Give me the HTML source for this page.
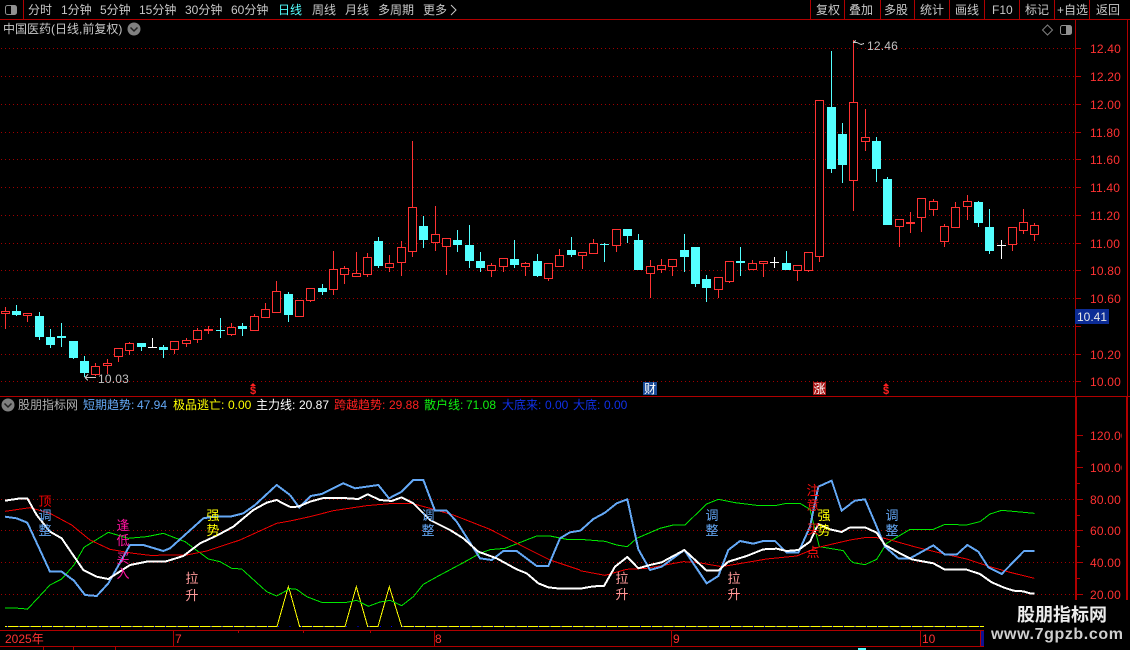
<!DOCTYPE html>
<html><head><meta charset="utf-8"><title>中国医药</title>
<style>
html,body{margin:0;padding:0;background:#000;width:1130px;height:650px;overflow:hidden}
svg{display:block;position:absolute;left:0;top:0}
text{font-family:"Liberation Sans","WenQuanYi Zen Hei","Noto Sans CJK SC",sans-serif;font-size:12px;white-space:pre}
.m text{fill:#c8c8c8}
.a text{fill:#ff3232;letter-spacing:.2px}
.v text{text-anchor:middle;font-size:13px}
.l{fill:none;shape-rendering:crispEdges}
</style></head>
<body>
<svg width="1130" height="650" viewBox="0 0 1130 650" xmlns="http://www.w3.org/2000/svg">
<defs><clipPath id="ax"><rect x="1078" y="20" width="44" height="600"/></clipPath></defs>
<rect width="1130" height="650" fill="#000"/>

<!-- grid -->
<path fill="none" stroke="#a00000" stroke-dasharray="1 3" shape-rendering="crispEdges" d="M1 48.500H1075M1 76.500H1075M1 104.500H1075M1 132.500H1075M1 159.500H1075M1 187.500H1075M1 215.500H1075M1 243.500H1075M1 270.500H1075M1 298.500H1075M1 326.500H1075M1 354.500H1075M1 381.500H1075M1 499.500H1075M1 530.500H1075M1 562.500H1075M1 594.500H1075"/>

<!-- frame lines -->
<path fill="none" stroke="#b00000" shape-rendering="crispEdges" d="M0 19.500H1130M23.500 0V19M810.500 0V19M844.500 0V19M880.500 0V19M914.500 0V19M949.500 0V19M984.500 0V19M1019.500 0V19M1054.500 0V19M1089.500 0V19M1075.500 20V630M1076.500 396V630M1127.500 20V600M1126.500 396V600M0 396.500H1130M0 630.500H984M0 646.500H984M173.500 631V646M434.500 631V646M671.500 631V646M920.500 631V646M980.500 631V646M43.500 647V650M73.500 647V650M115.500 647V650M238.500 630V633M303.500 630V633M370.500 630V633M1075 48.500h6M1075 76.500h6M1075 104.500h6M1075 132.500h6M1075 159.500h6M1075 187.500h6M1075 215.500h6M1075 243.500h6M1075 270.500h6M1075 298.500h6M1075 326.500h6M1075 354.500h6M1075 381.500h6M1077 435.500h6M1077 467.500h6M1077 499.500h6M1077 530.500h6M1077 562.500h6M1077 594.500h6M1077 451.500h3M1077 483.500h3M1077 515.500h3M1077 546.500h3M1077 578.500h3"/>

<!-- red wicks -->
<path class="l" stroke="#ff3232" d="M5.500 307V329M27.500 313V322M95.500 363V376M107.500 359V374M118.500 348V362M129.500 342V355M174.500 341V354M186.500 338V347M197.500 328V343M208.500 326V334M231.500 323V336M254.500 314V331M265.500 303V318M276.500 281V313M299.500 300V317M310.500 288V302M333.500 251V295M344.500 266V284M356.500 252V276M367.500 253V277M389.500 255V272M401.500 241V276M412.500 141V257M435.500 206V251M446.500 238V275M491.500 263V277M503.500 258V272M525.500 262V276M548.500 263V281M559.500 249V266M582.500 252V269M593.500 239V254M616.500 229V252M650.500 260V298M661.500 259V273M672.500 259V276M718.500 277V298M729.500 261V283M752.500 260V270M763.500 261V277M797.500 265V281M808.500 252V272M819.500 100V262M853.500 40V211M865.500 109V151M899.500 219V247M910.500 212V233M921.500 198V232M933.500 199V216M944.500 224V247M955.500 202V227M967.500 195V220M1012.500 227V251M1023.500 209V234M1034.500 223V241"/>
<!-- red bodies -->
<path class="l" style="fill:#000" stroke="#ff3232" d="M1.500 311.500h8v2h-8zM23.500 313.500h8v2h-8zM91.500 366.500h8v8h-8zM103.500 363.500h8v2h-8zM114.500 348.500h8v8h-8zM125.500 343.500h8v7h-8zM170.500 341.500h8v8h-8zM182.500 340.500h8v3h-8zM193.500 330.500h8v9h-8zM227.500 327.500h8v7h-8zM250.500 316.500h8v14h-8zM261.500 309.500h8v8h-8zM272.500 291.500h8v21h-8zM295.500 300.500h8v16h-8zM306.500 288.500h8v12h-8zM329.500 269.500h8v20h-8zM340.500 268.500h8v6h-8zM352.500 273.500h8v3h-8zM363.500 257.500h8v17h-8zM385.500 263.500h8v4h-8zM397.500 247.500h8v15h-8zM408.500 207.500h8v44h-8zM431.500 234.500h8v8h-8zM442.500 238.500h8v8h-8zM487.500 265.500h8v5h-8zM499.500 258.500h8v8h-8zM521.500 263.500h8v3h-8zM544.500 263.500h8v15h-8zM555.500 255.500h8v11h-8zM578.500 252.500h8v3h-8zM589.500 243.500h8v10h-8zM612.500 229.500h8v16h-8zM646.500 266.500h8v7h-8zM657.500 265.500h8v4h-8zM668.500 259.500h8v7h-8zM714.500 277.500h8v12h-8zM725.500 261.500h8v20h-8zM748.500 263.500h8v6h-8zM759.500 261.500h8v2h-8zM793.500 265.500h8v5h-8zM804.500 252.500h8v18h-8zM815.500 100.500h8v156h-8zM849.500 102.500h8v78h-8zM861.500 137.500h8v4h-8zM895.500 219.500h8v7h-8zM917.500 198.500h8v19h-8zM929.500 201.500h8v8h-8zM940.500 226.500h8v15h-8zM951.500 207.500h8v20h-8zM963.500 201.500h8v5h-8zM1008.500 227.500h8v17h-8zM1019.500 222.500h8v8h-8zM1030.500 225.500h8v9h-8z"/>
<path fill="#ff3232" shape-rendering="crispEdges" d="M204 329h9v2h-9zM906 222h9v2h-9z"/>

<!-- cyan -->
<path class="l" stroke="#54ffff" d="M16.500 305V316M39.500 312V340M50.500 329V348M61.500 323V347M73.500 341V359M84.500 356V377M141.500 343V351M163.500 345V358M220.500 318V338M242.500 323V336M288.500 292V322M322.500 284V295M378.500 237V268M423.500 216V248M457.500 230V252M469.500 225V268M480.500 252V272M514.500 240V268M537.500 254V277M571.500 237V257M604.500 243V262M627.500 229V243M638.500 234V270M684.500 234V272M695.500 247V287M706.500 275V302M740.500 247V276M786.500 251V270M831.500 51V173M842.500 123V183M876.500 137V182M887.500 177V225M978.500 201V227M989.500 209V254"/>
<path fill="#54ffff" shape-rendering="crispEdges" d="M12 311h9v4h-9zM35 316h9v21h-9zM46 337h9v8h-9zM57 336h9v2h-9zM69 341h9v17h-9zM80 361h9v12h-9zM137 343h9v4h-9zM159 347h9v3h-9zM216 330h9v1h-9zM238 326h9v3h-9zM284 294h9v21h-9zM318 288h9v4h-9zM374 241h9v25h-9zM419 226h9v14h-9zM453 240h9v5h-9zM465 245h9v16h-9zM476 261h9v7h-9zM510 259h9v6h-9zM533 261h9v15h-9zM567 250h9v5h-9zM600 244h9v1h-9zM623 229h9v7h-9zM634 240h9v30h-9zM680 250h9v7h-9zM691 247h9v37h-9zM702 279h9v9h-9zM736 261h9v2h-9zM782 263h9v7h-9zM827 107h9v62h-9zM838 134h9v31h-9zM872 141h9v28h-9zM883 179h9v46h-9zM974 202h9v21h-9zM985 227h9v24h-9z"/>

<!-- white doji -->
<path class="l" stroke="#fff" d="M152.500 338V348M148 347.500h9M774.500 257V268M770 262.500h9M1001.500 240V259M997 245.500h9"/>

<!-- high/low markers -->
<path fill="none" stroke="#c8c8c8" shape-rendering="crispEdges" d="M85 377.500h11M85 377.500l3-3M85 377.500l3 3M853 42.500h4M853 42.500l3-2M857 42.500l2 1 2 1 3-1"/>
<text x="98" y="383" fill="#c0c0c0" letter-spacing=".2">10.03</text>
<text x="867" y="50" fill="#c0c0c0" letter-spacing=".2">12.46</text>

<!-- top menu -->
<rect x="5.500" y="5.500" width="11" height="9" rx="2" fill="none" stroke="#909090"/>
<rect x="11" y="6" width="5" height="8" fill="#909090"/>
<g class="m">
<text x="28" y="14">分时</text><text x="61" y="14">1分钟</text><text x="100" y="14">5分钟</text><text x="139" y="14">15分钟</text><text x="185" y="14">30分钟</text><text x="231" y="14">60分钟</text>
<text x="278" y="14" style="fill:#54ffff">日线</text><text x="312" y="14">周线</text><text x="345" y="14">月线</text><text x="378" y="14">多周期</text><text x="423" y="14">更多</text>
<text x="816" y="14">复权</text><text x="849" y="14">叠加</text><text x="884" y="14">多股</text><text x="920" y="14">统计</text><text x="955" y="14">画线</text><text x="992" y="14">F10</text><text x="1025" y="14">标记</text><text x="1057" y="14">+自选</text><text x="1096" y="14">返回</text>
<text x="3" y="33">中国医药(日线,前复权)</text>
</g>
<path fill="none" stroke="#c8c8c8" d="M451 5l5 5-5 5"/>
<circle cx="134" cy="29" r="6.500" fill="#808080"/>
<path fill="none" stroke="#222" stroke-width="1.500" d="M130.500 27.500l3.500 3.500 3.500-3.500"/>
<path fill="none" stroke="#808080" d="M1047.500 25l5 5-5 5-5-5z"/>
<rect x="1060.500" y="25.500" width="11" height="9" rx="2" fill="none" stroke="#909090"/>
<rect x="1066" y="26" width="5" height="8" fill="#909090"/>

<!-- right axis -->
<g class="a" clip-path="url(#ax)">
<text x="1090" y="53">12.40</text><text x="1090" y="81">12.20</text><text x="1090" y="109">12.00</text><text x="1090" y="137">11.80</text><text x="1090" y="164">11.60</text><text x="1090" y="192">11.40</text><text x="1090" y="220">11.20</text><text x="1090" y="248">11.00</text><text x="1090" y="275">10.80</text><text x="1090" y="303">10.60</text><text x="1090" y="359">10.20</text><text x="1090" y="386">10.00</text>
<text x="1090" y="440">120.00</text><text x="1090" y="472">100.00</text><text x="1090" y="504">80.00</text><text x="1090" y="535">60.00</text><text x="1090" y="567">40.00</text><text x="1090" y="599">20.00</text>
</g>
<rect x="1075" y="309" width="34" height="15" fill="#0c2c96"/>
<text x="1077" y="321" fill="#e8e8e8">10.41</text>

<!-- event markers -->
<text x="253" y="394" text-anchor="middle" fill="#ff2020" font-weight="bold" style="font-size:11px">$</text>
<path fill="#ff2020" d="M253 383l3 3h-6z"/>
<rect x="643" y="382" width="14" height="13" fill="#1a4a96"/>
<text x="650" y="393" text-anchor="middle" fill="#fff">财</text>
<rect x="813" y="382" width="13" height="13" fill="#a81818"/>
<text x="819.500" y="393" text-anchor="middle" fill="#fff">涨</text>
<text x="886" y="394" text-anchor="middle" fill="#ff2020" font-weight="bold" style="font-size:11px">$</text>
<path fill="#ff2020" d="M886 383l3 3h-6z"/>

<!-- indicator legend -->
<circle cx="8" cy="405" r="6.500" fill="#808080"/>
<path fill="none" stroke="#222" stroke-width="1.500" d="M4.500 403.500l3.500 3.500 3.500-3.500"/>
<text x="18" y="409" fill="#b0b0b0">股朋指标网</text>
<text x="83" y="409" fill="#64a8f5">短期趋势:</text><text x="137" y="409" fill="#64a8f5">47.94</text>
<text x="173" y="409" fill="#ffff00">极品逃亡:</text><text x="228" y="409" fill="#ffff00">0.00</text>
<text x="256" y="409" fill="#fff">主力线:</text><text x="299" y="409" fill="#fff">20.87</text>
<text x="334" y="409" fill="#ff2020">跨越趋势:</text><text x="389" y="409" fill="#ff2020">29.88</text>
<text x="424" y="409" fill="#10f010">散户线:</text><text x="466" y="409" fill="#10f010">71.08</text>
<text x="502" y="409" fill="#1030e8">大底来:</text><text x="545" y="409" fill="#1030e8">0.00</text>
<text x="573" y="409" fill="#1030e8">大底:</text><text x="604" y="409" fill="#1030e8">0.00</text>

<!-- yellow line -->
<polyline class="l" stroke="#ffff00" points="5,626.500 277,626.500 288.300,586.700 290,591.700 299.600,626.500 345,626.500 356.300,586.700 367.700,626.500 378,626.500 389.300,586.700 401.700,626.500 984,626.500"/>
<path fill="none" stroke="#0000ff" stroke-dasharray="1 10.300" shape-rendering="crispEdges" d="M7 626.500H984"/>

<!-- green -->
<g class="l" stroke="#00e800" stroke-width="3">
<polyline transform="translate(0,470) scale(.33333)" points="15,414 65,415 82,418 150,345 185,327 222,285 252,232 325,187 385,205 440,200 490,190 555,215 625,267 660,275 695,295 725,297 800,365 830,378 870,356"/>
<polyline transform="translate(290,470) scale(.33333)" points="0,356 20,358 50,380 95,397 170,397 200,391 235,409 270,396 300,391 335,407 370,380 400,343 445,318 520,278 570,250 600,239 645,235 740,198 780,198 830,208 870,208"/>
<polyline transform="translate(580,470) scale(.33333)" points="0,208 75,214 110,225 142,230 170,205 240,175 280,165 315,165 380,102 415,88 465,98 530,106 590,106 620,100 660,100 690,118 718,230 760,237 790,242 810,270"/>
<polyline transform="translate(850,470) scale(.33333)" points="0,270 10,278 45,284 80,268 110,220 180,178 250,178 285,163 350,165 390,155 420,132 455,121 500,125 553,130"/>
</g>
<!-- red line -->
<g class="l" stroke="#f00000" stroke-width="3">
<polyline transform="translate(0,470) scale(.33333)" points="15,124 90,113 150,130 215,165 270,210 330,238 400,250 450,256 560,255 620,243 720,210 830,160 870,153"/>
<polyline transform="translate(290,470) scale(.33333)" points="0,153 60,140 130,122 230,107 310,100 365,100 420,115 490,135 600,178 700,230 780,270 870,300"/>
<polyline transform="translate(580,470) scale(.33333)" points="0,302 75,316 140,298 200,295 310,275 350,277 425,290 560,267 650,258 715,232 810,210"/>
<polyline transform="translate(850,470) scale(.33333)" points="0,210 50,202 100,204 200,232 300,256 350,267 420,290 480,307 553,325"/>
</g>
<!-- blue -->
<g class="l" stroke="#64a8f5" stroke-width="6">
<polyline transform="translate(0,470) scale(.33333)" points="15,140 50,145 82,158 150,305 185,305 222,332 255,375 290,378 325,340 390,225 430,225 490,243 510,235 610,145 640,140 690,140 730,130 765,105 830,45 870,75"/>
<polyline transform="translate(290,470) scale(.33333)" points="0,75 28,113 62,78 95,72 160,40 195,55 265,45 297,85 335,65 370,30 400,30 435,122 470,122 500,155 570,265 605,270 640,243 680,243 740,288 775,288 810,205 840,187 870,182"/>
<polyline transform="translate(580,470) scale(.33333)" points="0,183 40,147 75,128 110,100 142,88 175,238 210,300 245,290 313,240 380,340 415,318 445,240 480,213 520,221 550,213 585,213 620,248 655,248 690,170 715,50 755,32 785,122 810,103"/>
<polyline transform="translate(850,470) scale(.33333)" points="0,102 15,92 45,88 80,170 105,230 145,265 180,265 250,226 285,254 320,254 352,225 385,245 415,292 455,312 522,243 553,243"/>
</g>
<!-- white -->
<g class="l" stroke="#ffffff" stroke-width="6">
<polyline transform="translate(0,470) scale(.33333)" points="15,92 55,86 82,85 110,135 150,185 185,205 250,300 290,320 325,327 390,285 440,275 495,275 550,258 600,220 650,197 700,170 760,120 800,98 830,90 870,111"/>
<polyline transform="translate(290,470) scale(.33333)" points="0,111 25,110 60,95 100,84 160,84 205,87 233,73 270,90 305,93 335,82 370,100 420,150 480,180 520,205 565,245 620,265 680,298 710,310 745,340 775,352 810,356 870,356"/>
<polyline transform="translate(580,470) scale(.33333)" points="0,356 40,349 72,348 105,290 142,261 175,295 210,285 245,277 313,240 380,302 415,302 445,275 500,258 550,238 590,236 620,243 655,240 690,215 715,162 750,178 785,186 810,172"/>
<polyline transform="translate(850,470) scale(.33333)" points="0,172 45,172 80,188 105,225 150,250 185,268 250,280 285,299 350,299 390,312 425,337 460,352 490,362 520,364 540,370 553,370"/>
</g>

<!-- chart labels -->
<g class="v">
<text x="45" y="506" fill="#f00000">顶</text><text x="45" y="520" fill="#64a8f5">调</text><text x="45" y="535" fill="#64a8f5">整</text>
<text x="123" y="530" fill="#ff14a0">逢</text><text x="123" y="545" fill="#ff14a0">低</text><text x="123" y="563" fill="#ff14a0">买</text><text x="123" y="578" fill="#ff14a0">入</text>
<text x="192" y="583" fill="#ff9a9a">拉</text><text x="192" y="600" fill="#ff9a9a">升</text>
<text x="213" y="520" fill="#ffff00">强</text><text x="213" y="535" fill="#ffff00">势</text>
<text x="428" y="520" fill="#64a8f5">调</text><text x="428" y="535" fill="#64a8f5">整</text>
<text x="622" y="583" fill="#ff9a9a">拉</text><text x="622" y="599" fill="#ff9a9a">升</text>
<text x="712" y="520" fill="#64a8f5">调</text><text x="712" y="535" fill="#64a8f5">整</text>
<text x="734" y="583" fill="#ff9a9a">拉</text><text x="734" y="599" fill="#ff9a9a">升</text>
<text x="813" y="495" fill="#ff1010">注</text><text x="813" y="510" fill="#ff1010">意</text><text x="813" y="534" fill="#ff1010">买</text><text x="813" y="557" fill="#ff1010">点</text>
<text x="824" y="520" fill="#ffff00">强</text><text x="824" y="535" fill="#ffff00">势</text>
<text x="892" y="520" fill="#64a8f5">调</text><text x="892" y="535" fill="#64a8f5">整</text>
</g>

<!-- time axis -->
<text x="5" y="643" fill="#ff3232">2025年</text>
<text x="175" y="643" fill="#ff3232">7</text>
<text x="435" y="643" fill="#ff3232">8</text>
<text x="673" y="643" fill="#ff3232">9</text>
<text x="922" y="643" fill="#ff3232">10</text>
<rect x="981" y="631" width="3" height="15" fill="#101090"/>
<rect x="858" y="648" width="8" height="2" fill="#54ffff"/>

<!-- watermark -->
<rect x="984" y="600" width="146" height="50" fill="#000"/>
<text x="1017" y="621" fill="#ececec" font-weight="bold" style="font-size:18px">股朋指标网</text>
<text x="991" y="639" fill="#cfcfcf" font-weight="bold" letter-spacing=".6" style="font-size:16px">www.7gpzb.com</text>
</svg>
</body></html>
